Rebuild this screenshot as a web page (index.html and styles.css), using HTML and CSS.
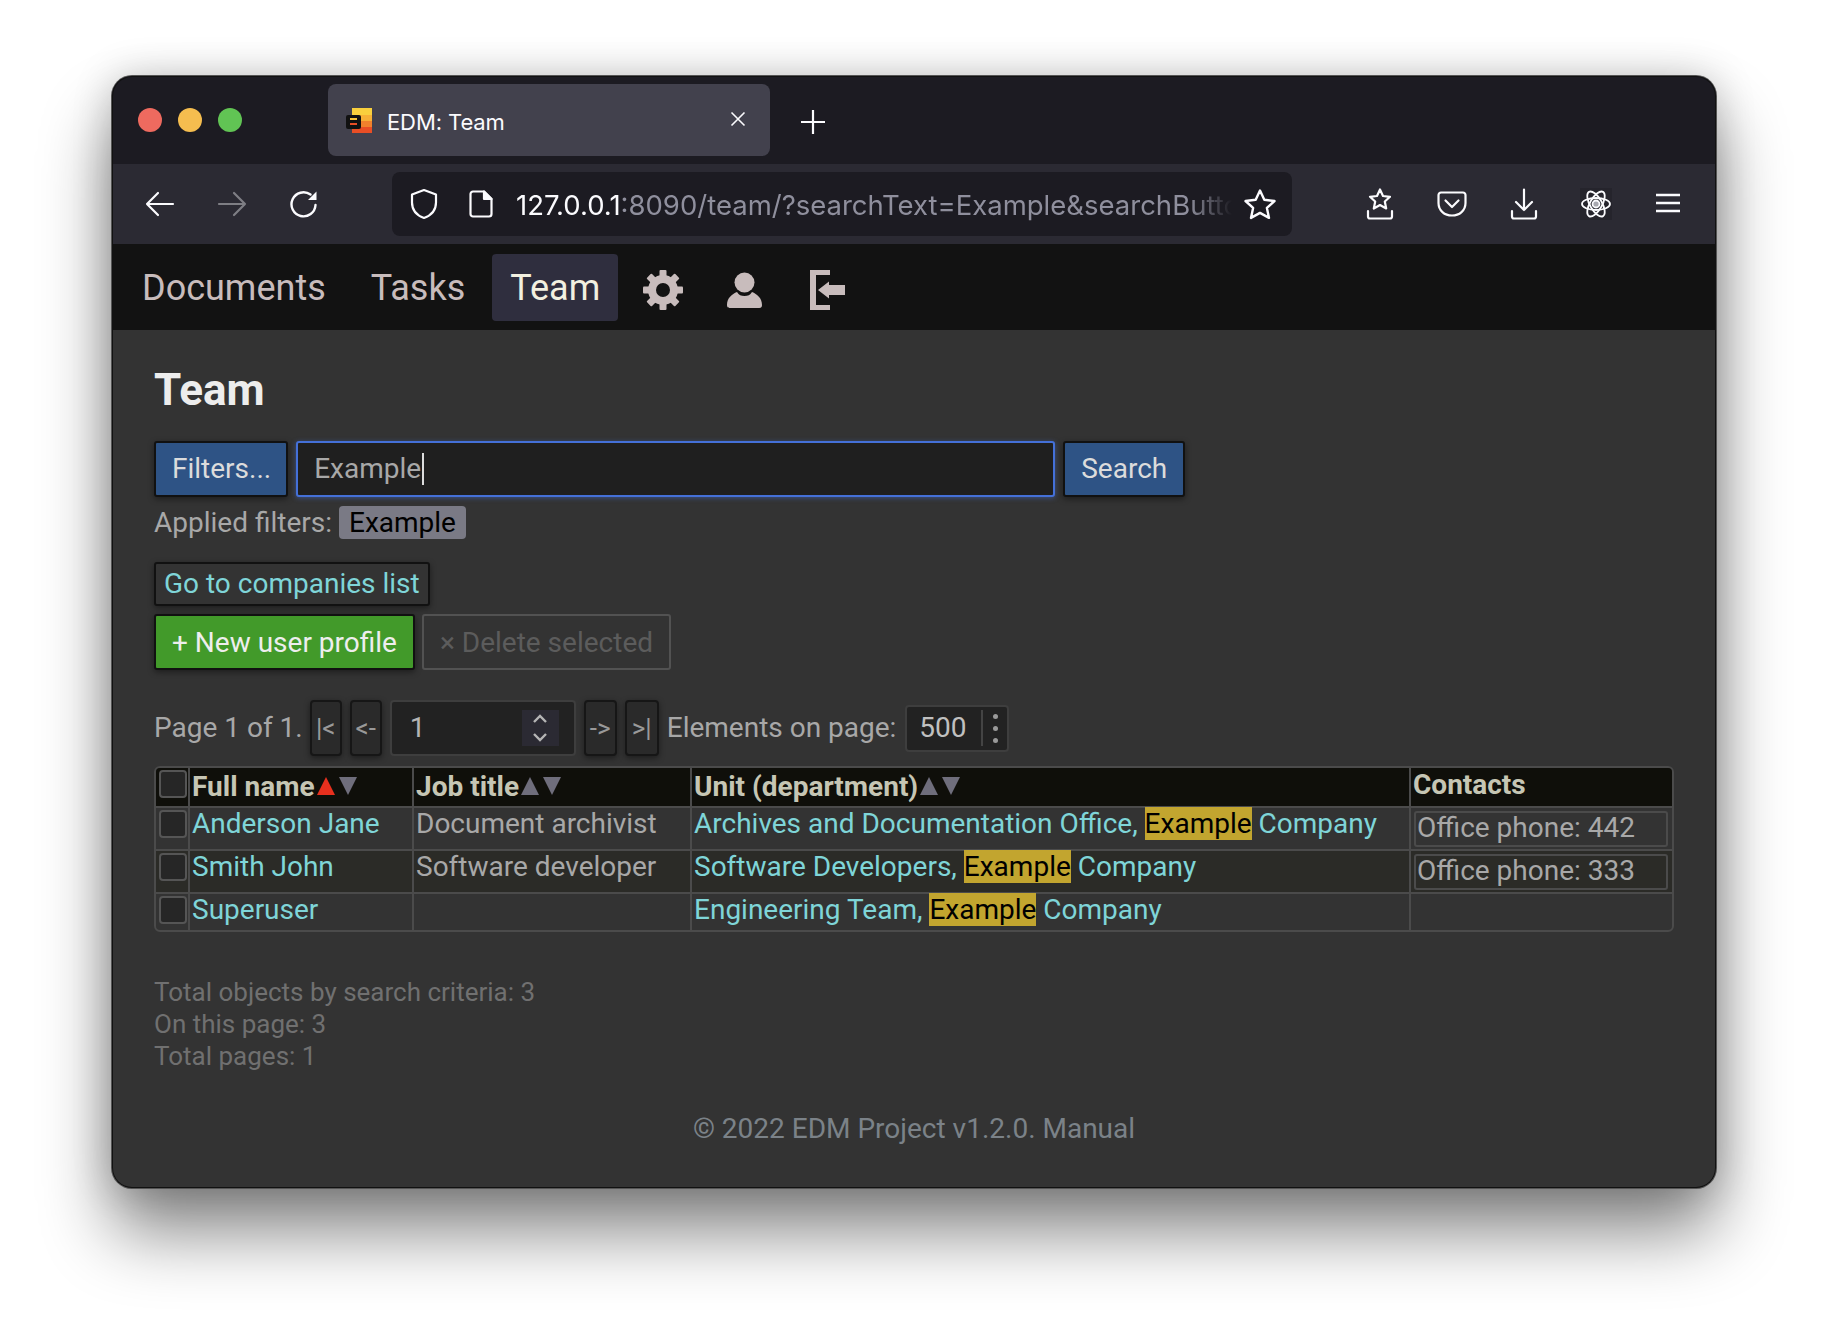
FILE: index.html
```html
<!DOCTYPE html>
<html lang="en">
  <head>
    <meta charset="UTF-8" />
    <meta name="viewport" content="width=device-width, initial-scale=1.0" />
    <title>EDM: Team</title>
    <link rel="stylesheet" href="styles.css">
  </head>
  <body>
    <div class="window">
      <div class="titlebar">
        <div class="lights">
          <span class="light red"></span>
          <span class="light yellow"></span>
          <span class="light green"></span>
        </div>
        <div class="tab">
          <svg class="favicon" width="26" height="25" viewBox="0 0 26 25">
            <rect x="6" y="0" width="20" height="7" fill="#f9cf3d"/>
            <rect x="6" y="7" width="20" height="6" fill="#f7b036"/>
            <rect x="6" y="13" width="20" height="6" fill="#f1812c"/>
            <rect x="6" y="19" width="20" height="6" fill="#e94e25"/>
            <rect x="0" y="7" width="15" height="14" rx="2" fill="#111"/>
            <rect x="4" y="10" width="7" height="2" fill="#f8c33a"/>
            <rect x="4" y="15" width="7" height="2" fill="#e94e25"/>
          </svg>
          <span class="tab-title">EDM: Team</span>
          <svg class="tab-close" width="16" height="16" viewBox="0 0 16 16">
            <path d="M1.5 1.5l13 13M14.5 1.5l-13 13" stroke="#fbfbfe" stroke-width="1.6" fill="none"/>
          </svg>
        </div>
        <svg class="new-tab" width="24" height="24" viewBox="0 0 24 24">
          <path d="M12 0v24M0 12h24" stroke="#fbfbfe" stroke-width="2.2" fill="none"/>
        </svg>
      </div>

      <div class="toolbar">
        <div class="tool">
          <svg width="30" height="26" viewBox="0 0 30 26" fill="none" stroke="#fbfbfe" stroke-width="2.2" stroke-linecap="round" stroke-linejoin="round"><path d="M2 13h26M13 2L2 13l11 11"/></svg>
        </div>
        <div class="tool dim">
          <svg width="30" height="26" viewBox="0 0 30 26" fill="none" stroke="#fbfbfe" stroke-width="2.2" stroke-linecap="round" stroke-linejoin="round"><path d="M2 13h26M17 2l11 11-11 11"/></svg>
        </div>
        <div class="tool">
          <svg width="30" height="30" viewBox="0 0 30 30" fill="none" stroke="#fbfbfe" stroke-width="2.4" stroke-linecap="round"><path d="M26.5 16a12 12 0 1 1-5-10.400"/><path d="M27.500 2.500v8.500h-8.500z" fill="#fbfbfe" stroke="none"/></svg>
        </div>

        <div class="urlbar">
          <svg class="url-shield" width="30" height="32" viewBox="0 0 30 32" fill="none" stroke="#fbfbfe" stroke-width="2.2" stroke-linejoin="round"><path d="M15 2l12 4.500v8c0 8-5 13-12 15.500C8 27.500 3 22.500 3 14.500v-8z"/></svg>
          <svg class="url-page" width="24" height="28" viewBox="0 0 24 28" fill="none" stroke="#fbfbfe" stroke-width="2.2" stroke-linejoin="round"><path d="M4 1.500h11l7.500 7.500v15a2.500 2.500 0 0 1-2.500 2.500H4A2.500 2.500 0 0 1 1.500 24V4A2.500 2.500 0 0 1 4 1.500z"/><path d="M15 1.500V9h7.500z" fill="#fbfbfe"/></svg>
          <div class="url-text"><b>127.0.0.1</b>:8090/team/?searchText=Example&amp;searchButton=</div>
          <svg class="url-star" width="34" height="32" viewBox="0 0 34 32" fill="none" stroke="#fbfbfe" stroke-width="2.4" stroke-linejoin="round"><path d="M17 2.500l4.300 9.300 10.200 1.200-7.600 6.900 2.100 10-9-5-9 5 2.100-10-7.600-6.900 10.200-1.200z"/></svg>
        </div>

        <div class="tool-group">
          <div class="tool">
            <svg width="28" height="32" viewBox="0 0 28 32" fill="none" stroke="#fbfbfe" stroke-width="2.2" stroke-linejoin="round" stroke-linecap="round"><path d="M14 1.500l3 6.500 7 .8-5.200 4.700 1.400 7-6.200-3.500-6.200 3.500 1.400-7L4 8.800l7-.8z"/><path d="M2 23v5.500a2 2 0 0 0 2 2h20a2 2 0 0 0 2-2V23"/></svg>
          </div>
          <div class="tool">
            <svg width="30" height="26" viewBox="0 0 30 26" fill="none" stroke="#fbfbfe" stroke-width="2.2" stroke-linejoin="round" stroke-linecap="round"><path d="M4 1.500h22a2.500 2.500 0 0 1 2.500 2.500v8C28.500 19.500 22.500 24.500 15 24.500S1.500 19.500 1.500 12V4A2.500 2.500 0 0 1 4 1.500z"/><path d="M8.500 9.500L15 16l6.500-6.500"/></svg>
          </div>
          <div class="tool">
            <svg width="28" height="32" viewBox="0 0 28 32" fill="none" stroke="#fbfbfe" stroke-width="2.2" stroke-linejoin="round" stroke-linecap="round"><path d="M14 1.500V22M6 14l8 8 8-8"/><path d="M2 23v5.500a2 2 0 0 0 2 2h20a2 2 0 0 0 2-2V23"/></svg>
          </div>
          <div class="tool">
            <svg class="atom" width="32" height="32" viewBox="0 0 32 32" fill="none" stroke="#fbfbfe" stroke-width="1.800"><ellipse cx="16" cy="16" rx="14" ry="6"/><ellipse cx="16" cy="16" rx="14" ry="6" transform="rotate(60 16 16)"/><ellipse cx="16" cy="16" rx="14" ry="6" transform="rotate(120 16 16)"/><circle cx="16" cy="16" r="3.500" fill="#a8a8b0"/></svg>
          </div>
          <div class="tool">
            <svg class="menu-icon" width="26" height="20" viewBox="0 0 26 20" stroke="#fbfbfe" stroke-width="2.400" fill="none"><path d="M1 2h24M1 10h24M1 18h24"/></svg>
          </div>
        </div>
      </div>

      <nav class="navbar">
        <a class="nav-link">Documents</a>
        <a class="nav-link">Tasks</a>
        <a class="nav-link active">Team</a>
        <div class="nav-icon nav-gear">
          <svg width="40" height="40" viewBox="0 0 40 40" fill="#c8bcbc">
            <rect x="16.500" y="0" width="7" height="40" rx="1"/>
            <rect x="16.500" y="0" width="7" height="40" rx="1" transform="rotate(45 20 20)"/>
            <rect x="16.500" y="0" width="7" height="40" rx="1" transform="rotate(90 20 20)"/>
            <rect x="16.500" y="0" width="7" height="40" rx="1" transform="rotate(135 20 20)"/>
            <circle cx="20" cy="20" r="15"/>
            <circle cx="20" cy="20" r="7" fill="#121212"/>
          </svg>
        </div>
        <div class="nav-icon nav-user">
          <svg width="37" height="37" viewBox="0 0 37 37" fill="#c8bcbc">
            <circle cx="18.500" cy="10.500" r="10"/>
            <path d="M1 33C1 26 6 22 11 20C13 23 15 24 18.500 24C22 24 24 23 26 20C31 22 36 26 36 33C36 36 34 36 32 36L5 36C3 36 1 36 1 33z"/>
          </svg>
        </div>
        <div class="nav-icon nav-exit">
          <svg width="36" height="40" viewBox="0 0 36 40" fill="#c8bcbc">
            <path d="M1 0H21V5H7V35H21V40H1z"/>
            <path d="M9 20L20 11.500V15H36V25H20V28.500z"/>
          </svg>
        </div>
      </nav>

      <main class="content">
        <h1>Team</h1>

        <div class="search-row">
          <button class="btn btn-blue btn-filters">Filters...</button>
          <div class="search-input"><span>Example</span><i class="caret"></i></div>
          <button class="btn btn-blue">Search</button>
        </div>

        <div class="applied">
          <span>Applied filters:</span>
          <span class="chip">Example</span>
        </div>

        <a class="btn btn-link">Go to companies list</a>

        <div class="action-row">
          <button class="btn btn-green">+ New user profile</button>
          <button class="btn btn-disabled">× Delete selected</button>
        </div>

        <div class="pager">
          <span class="pager-text first">Page 1 of 1.</span>
          <button class="page-btn">|&lt;</button>
          <button class="page-btn">&lt;-</button>
          <div class="page-input">
            <span>1</span>
            <div class="spin">
              <svg width="16" height="32" viewBox="0 0 16 32" fill="none" stroke="#b5b5b5" stroke-width="2.400"><path d="M2 10l6-6 6 6M2 22l6 6 6-6"/></svg>
            </div>
          </div>
          <button class="page-btn next">-&gt;</button>
          <button class="page-btn last">&gt;|</button>
          <span class="pager-text">Elements on page:</span>
          <div class="page-size">
            <span class="size-value">500</span>
            <span class="size-dots"><i></i><i></i><i></i></span>
          </div>
        </div>

        <table class="team-table">
          <colgroup>
            <col class="col-check" />
            <col class="col-name" />
            <col class="col-job" />
            <col class="col-unit" />
            <col class="col-contacts" />
          </colgroup>
          <thead>
            <tr>
              <th><span class="check"></span></th>
              <th>Full name<span class="arrow up on"></span><span class="arrow down"></span></th>
              <th>Job title<span class="arrow up"></span><span class="arrow down"></span></th>
              <th>Unit (department)<span class="arrow up"></span><span class="arrow down"></span></th>
              <th class="contacts-head">Contacts</th>
            </tr>
          </thead>
          <tbody>
            <tr>
              <td><span class="check"></span></td>
              <td><a>Anderson Jane</a></td>
              <td>Document archivist</td>
              <td><a>Archives and Documentation Office, <mark>Example</mark> Company</a></td>
              <td><div class="contact">Office phone: 442</div></td>
            </tr>
            <tr>
              <td><span class="check"></span></td>
              <td><a>Smith John</a></td>
              <td>Software developer</td>
              <td><a>Software Developers, <mark>Example</mark> Company</a></td>
              <td><div class="contact">Office phone: 333</div></td>
            </tr>
            <tr>
              <td><span class="check"></span></td>
              <td><a>Superuser</a></td>
              <td></td>
              <td><a>Engineering Team, <mark>Example</mark> Company</a></td>
              <td></td>
            </tr>
          </tbody>
        </table>

        <div class="totals">
          <div>Total objects by search criteria: 3</div>
          <div>On this page: 3</div>
          <div>Total pages: 1</div>
        </div>

        <footer class="page-footer">© 2022 EDM Project v1.2.0. Manual</footer>
      </main>
    </div>
  </body>
</html>
```

FILE: styles.css
```css
html,
body {
  margin: 0;
  height: 100%;
}

body {
  background: #fff;
  padding: 76px 112px 0;
  box-sizing: border-box;
  font-family: Roboto, sans-serif;
  overflow: hidden;
}

.window {
  position: relative;
  width: 1604px;
  height: 1112px;
  border-radius: 20px;
  overflow: hidden;
  background: #333;
  box-shadow: 0 0 0 1px #555, 0 44px 70px rgba(0, 0, 0, 0.48), 0 0 40px rgba(0, 0, 0, 0.2);
}

/* thin dark line just inside the window edge */
.window::after {
  content: "";
  position: absolute;
  inset: 0;
  border-radius: 20px;
  box-shadow: inset 0 0 0 1px #111;
  pointer-events: none;
}

/* browser chrome */
.titlebar {
  height: 88px;
  background: #1c1b22;
  display: flex;
  align-items: flex-start;
}

.lights {
  display: flex;
  gap: 16px;
  margin: 32px 0 0 26px;
  width: 190px;
}

.light {
  width: 24px;
  height: 24px;
  border-radius: 50%;
}
.red {
  background: #ee6a5f;
}
.yellow {
  background: #f5bd4f;
}
.green {
  background: #61c454;
}

.tab {
  width: 442px;
  height: 72px;
  margin-top: 8px;
  background: #42414d;
  border-radius: 8px;
  display: flex;
  align-items: center;
  padding: 0 24px 0 18px;
  box-sizing: border-box;
}

.tab-title {
  flex: 1;
  margin: 3px 0 0 15px;
  font-family: Inter, sans-serif;
  font-size: 22px;
  letter-spacing: -0.1px;
  color: #fbfbfe;
}

.tab-close {
  margin-top: -2px;
}

.new-tab {
  margin: 34px 0 0 31px;
}

.toolbar {
  height: 80px;
  background: #2b2a33;
  display: flex;
  align-items: center;
  padding-left: 12px;
}

.tool {
  width: 72px;
  height: 64px;
  display: flex;
  align-items: center;
  justify-content: center;
}

.tool.dim svg {
  opacity: 0.4;
}

.urlbar {
  width: 900px;
  height: 64px;
  margin-left: 52px;
  background: #1c1b22;
  border-radius: 8px;
  display: flex;
  align-items: center;
  box-sizing: border-box;
  padding-left: 17px;
}

.url-page {
  margin-left: 30px;
}

.url-text {
  width: 716px;
  margin: 2px 0 0 23px;
  font-family: Inter, sans-serif;
  font-size: 27.5px;
  line-height: 40px;
  color: #8f8f9d;
  white-space: nowrap;
  overflow: hidden;
  -webkit-mask-image: linear-gradient(to right, #000 94%, transparent 100%);
  mask-image: linear-gradient(to right, #000 94%, transparent 100%);
}

.url-text b {
  font-weight: 400;
  color: #fbfbfe;
}

.url-star {
  margin-left: 11px;
}

.tool-group {
  display: flex;
  margin-left: 52px;
}

.atom {
  background: #25242c;
}

.menu-icon {
  margin-top: -2px;
}

/* site nav */
.navbar {
  height: 86px;
  background: #121212;
  display: flex;
  align-items: flex-start;
  padding: 10px 0 0 12px;
  box-sizing: border-box;
}

.nav-link {
  height: 67px;
  line-height: 68px;
  padding: 0 18px;
  margin-right: 9px;
  font-size: 36px;
  color: #c8bcbc;
  border-radius: 4px;
}

.nav-link.active {
  background: #2f2e3e;
  color: #f2f0e0;
  margin-right: 0;
}

.nav-icon {
  display: flex;
}

.nav-gear {
  margin: 16px 0 0 25px;
}
.nav-user {
  margin: 18px 0 0 43px;
}
.nav-exit {
  margin: 16px 0 0 46px;
}

/* page */
.content {
  padding: 0 42px;
  font-size: 28px;
  line-height: 32px;
  color: #a8a8a8;
}

h1 {
  margin: 0;
  padding-top: 35px;
  font-size: 44px;
  line-height: 50px;
  font-weight: 700;
  color: #ededed;
}

.btn {
  display: inline-block;
  box-sizing: border-box;
  font: inherit;
  border-radius: 3px;
  padding: 0 16px;
  border: 2px solid #111;
  box-shadow: 0 2px 6px rgba(0, 0, 0, 0.45);
}

.search-row {
  display: flex;
  gap: 8px;
  margin-top: 26px;
  height: 56px;
}

.btn-blue {
  background: #2e5385;
  color: #dcdcdc;
}

.btn-filters {
  padding-right: 15px;
}

.search-input {
  width: 759px;
  box-sizing: border-box;
  background: #1f1f1f;
  border: 2px solid #4470d8;
  border-radius: 3px;
  padding: 0 16px;
  display: flex;
  align-items: center;
  box-shadow: 0 1px 5px rgba(68, 112, 216, 0.5);
}

.caret {
  width: 2px;
  height: 32px;
  background: #ddd;
  margin-left: 1px;
}

.applied {
  display: flex;
  align-items: center;
  gap: 7px;
  margin-top: 9px;
  height: 33px;
}

.chip {
  background: #7a7a85;
  color: #000;
  border-radius: 4px;
  padding: 0 10px;
  height: 33px;
  line-height: 34px;
}

.btn-link {
  margin-top: 23px;
  height: 44px;
  line-height: 39px;
  padding: 0 8px;
  color: #7fd5d8;
  background: #333;
  display: table;
}

.action-row {
  display: flex;
  gap: 7px;
  margin-top: 8px;
  height: 56px;
}

.action-row .btn {
  padding-top: 2px;
}

.btn-green {
  background: #429a2a;
  color: #eee;
}

.btn-disabled {
  background: transparent;
  color: #5c5c5c;
  border-color: #525252;
  box-shadow: none;
}

.pager {
  display: flex;
  align-items: center;
  gap: 8px;
  margin-top: 30px;
  height: 56px;
}

.pager-text.first {
  margin-right: -1px;
}

.page-btn {
  width: 32px;
  height: 56px;
  box-sizing: border-box;
  padding: 0;
  font: inherit;
  font-size: 26px;
  color: #999;
  background: #2a2a2a;
  border: 2px solid #161616;
  border-radius: 4px;
  box-shadow: 0 2px 6px rgba(0, 0, 0, 0.45);
}

.page-btn.next {
  width: 33px;
}
.page-btn.last {
  width: 34px;
}

.page-input {
  width: 186px;
  height: 56px;
  box-sizing: border-box;
  background: #222;
  border: 2px solid #3e3e3e;
  border-radius: 4px;
  padding: 0 15px 0 18px;
  display: flex;
  align-items: center;
  justify-content: space-between;
  color: #b5b5b5;
}

.spin {
  width: 37px;
  height: 36px;
  background: #2b2a33;
  display: flex;
  align-items: center;
  justify-content: center;
}

.page-size {
  width: 104px;
  height: 47px;
  margin-left: 1px;
  box-sizing: border-box;
  background: #222;
  border: 2px solid #3e3e3e;
  border-radius: 4px;
  display: flex;
  align-items: center;
  color: #c0c0c0;
}

.size-value {
  width: 71px;
  padding-right: 3px;
  text-align: center;
  border-right: 2px solid #444;
  line-height: 36px;
}

.size-dots {
  flex: 1;
  display: flex;
  flex-direction: column;
  align-items: center;
  gap: 7px;
}

.size-dots i {
  width: 5px;
  height: 5px;
  border-radius: 50%;
  background: #999;
}

/* table */
.team-table {
  width: 1520px;
  margin-top: 10px;
  table-layout: fixed;
  border-collapse: separate;
  border-spacing: 0;
  border: 2px solid #4b4b4b;
  border-radius: 6px;
  overflow: hidden;
}

.col-check {
  width: 34px;
}
.col-name {
  width: 224px;
}
.col-job {
  width: 278px;
}
.col-unit {
  width: 719px;
}

th,
td {
  padding: 0 2px;
  height: 41px;
  text-align: left;
  vertical-align: top;
  border-right: 2px solid #4b4b4b;
  border-bottom: 2px solid #4b4b4b;
  font-weight: 400;
  white-space: nowrap;
}

th:last-child,
td:last-child {
  border-right: 0;
}

tbody tr:last-child td {
  border-bottom: 0;
  height: 36px;
}

th {
  height: 36px;
  background: #0f0f0a;
  color: #c6c6b4;
  font-weight: 700;
  font-size: 28px;
  line-height: 38px;
}

.contacts-head {
  line-height: 34px;
}

tbody tr:nth-child(2) td {
  background: #2b2b27;
}

td {
  line-height: 31px;
}

.check {
  display: block;
  width: 28px;
  height: 28px;
  margin: 2px 0 0 1px;
  background: #262626;
  border: 2px solid #555;
  border-radius: 4px;
  box-sizing: border-box;
}

a {
  color: #7fd5d8;
  text-decoration: none;
}

mark {
  background: #c2a52f;
  color: #000;
}

.arrow {
  display: inline-block;
  width: 0;
  height: 0;
  border-left: 9px solid transparent;
  border-right: 9px solid transparent;
  margin: 0 2px;
  vertical-align: 1px;
}
.arrow.up {
  border-bottom: 18px solid #6f6e7c;
}
.arrow.up.on {
  border-bottom-color: #e8301e;
}
.arrow.down {
  border-top: 18px solid #6f6e7c;
}

.contact {
  margin: 3px 2px 0 1px;
  height: 36px;
  box-sizing: border-box;
  border: 2px solid #4b4b4b;
  border-radius: 3px;
  line-height: 29px;
  padding-left: 1px;
}

.totals {
  margin-top: 44px;
  font-size: 26px;
  color: #707070;
}

.page-footer {
  margin-top: 41px;
  text-align: center;
  font-size: 28px;
  color: #7b8288;
}
```
